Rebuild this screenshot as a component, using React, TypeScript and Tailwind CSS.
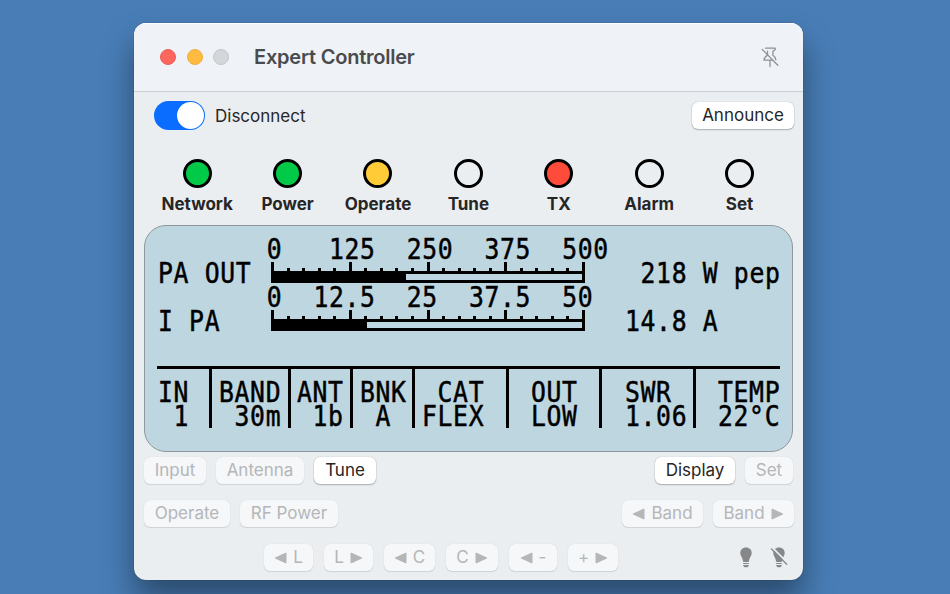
import clsx from 'clsx'

const leds = [
  { name: 'Network', color: 'bg-[#00ca48]' },
  { name: 'Power', color: 'bg-[#00ca48]' },
  { name: 'Operate', color: 'bg-[#ffcc37]' },
  { name: 'Tune', color: 'bg-transparent' },
  { name: 'TX', color: 'bg-[#ff4b3a]' },
  { name: 'Alarm', color: 'bg-transparent' },
  { name: 'Set', color: 'bg-transparent' },
]

const statusCells = [
  { width: 'w-[55px]', pad: 'pl-[1px]', lines: ['IN', ' 1'] },
  { width: 'w-[79px]', pad: 'pl-[7px]', lines: ['BAND', ' 30m'] },
  { width: 'w-[62px]', pad: 'pl-[6px]', lines: ['ANT', ' 1b'] },
  { width: 'w-[62px]', pad: 'pl-[7px]', lines: ['BNK', ' A'] },
  { width: 'w-[94px]', pad: 'pl-[7px]', lines: [' CAT', 'FLEX'] },
  { width: 'w-[93px]', pad: 'pl-[22px]', lines: ['OUT', 'LOW'] },
  { width: 'w-[94px]', pad: 'pl-[23px]', lines: ['SWR', '1.06'] },
  { width: 'w-[84px]', pad: 'pl-[22px]', lines: ['TEMP', '22°C'] },
]

function LcdText({ children }: { children: string }) {
  return (
    <div className="h-[24px] origin-left scale-x-[0.86] font-['DejaVu_Sans_Mono',monospace] text-[28.78px] leading-[24px] tracking-[0.76px] whitespace-pre text-black [-webkit-text-stroke:0.5px_#000]">
      {children}
    </div>
  )
}

function Meter({ value }: { value: number }) {
  const ticks = Array.from({ length: 21 }, (_, i) => i)
  return (
    <svg width="314" height="21" viewBox="0 0 314 21" className="mt-px block shrink-0" shapeRendering="crispEdges">
      <rect x="0" y="9" width="314" height="3" />
      <rect x="0" y="18" width="314" height="3" />
      <rect x="311" y="9" width="3" height="12" />
      <rect x="0" y="9" width={value} height="12" />
      {ticks.map((i) => (
        <rect
          key={i}
          x={Math.round(i * 15.55)}
          y={i % 5 === 0 ? 0 : 6}
          width="3"
          height={i % 5 === 0 ? 9 : 3}
        />
      ))}
    </svg>
  )
}

function MeterRow({ scale, label, value, reading }: { scale: string; label: string; value: number; reading: string }) {
  return (
    <div className="h-[48px]">
      <LcdText>{scale}</LcdText>
      <div className="flex h-[24px]">
        <div className="w-[113px] shrink-0">
          <LcdText>{label}</LcdText>
        </div>
        <Meter value={value} />
        <div className="ml-[40px] w-0">
          <LcdText>{reading}</LcdText>
        </div>
      </div>
    </div>
  )
}

function Arrow({ left }: { left?: boolean }) {
  return (
    <svg width="13" height="12" viewBox="0 0 13 12" fill="currentColor" stroke="currentColor" strokeLinejoin="round">
      {left ? <path d="M1.2 6 12 1V11Z" /> : <path d="M11.8 6 1 1V11Z" />}
    </svg>
  )
}

function Button({
  label,
  width,
  active,
  arrow,
}: {
  label: string
  width: string
  active?: boolean
  arrow?: 'left' | 'right'
}) {
  return (
    <button
      className={clsx(
        'flex h-[27px] shrink-0 items-center justify-center gap-[6px] rounded-[6px] text-[17px] whitespace-nowrap',
        width,
        active
          ? 'bg-white text-[#262626] shadow-[0_0_1px_rgba(0,0,0,0.3),0_1px_1.5px_rgba(0,0,0,0.25)]'
          : 'bg-[#f5f7f9] text-[#b4b6b8] shadow-[0_0_1px_rgba(0,0,0,0.15),0_1px_1px_rgba(0,0,0,0.1)]'
      )}
    >
      {arrow === 'left' && <Arrow left />}
      {label}
      {arrow === 'right' && <Arrow />}
    </button>
  )
}

function PinSlash() {
  return (
    <svg width="18" height="21" viewBox="0 0 18 21" fill="none" stroke="#8f9194" strokeWidth="1.3" strokeLinecap="round" strokeLinejoin="round">
      <path d="M4.5 1.2H14.2V2.6L11.9 4.6V8.2C13.6 9.2 14.6 10.7 14.8 12.6" />
      <path d="M6.5 4.2V8.2C4.3 9.4 3.1 11 3 13.2H11.5" />
      <path d="M9 13.5V19.5" />
      <path d="M1.2 2.4 16.8 18.3" />
    </svg>
  )
}

function Bulb({ slash }: { slash?: boolean }) {
  return (
    <svg width="18" height="21" viewBox="0 0 18 21" fill="#858789">
      <path d="M9 .5C5.6.5 3.3 2.8 3.3 5.9 3.3 9 5.6 10.1 6 14.2 6.1 14.8 6.3 15 6.8 15H11.2C11.7 15 11.9 14.8 12 14.2 12.4 10.1 14.7 9 14.7 5.9 14.7 2.8 12.4.5 9 .5Z" />
      <path d="M6.2 16H11.8V17.1H6.2ZM6.2 18H11.8C11.7 19.5 10.7 20.3 9 20.3S6.3 19.5 6.2 18Z" />
      {slash && (
        <>
          <path d="M2.6.8 17.5 15.7" stroke="#ebeef1" strokeWidth="1.8" />
          <path d="M1.5 2 16.7 17.2" stroke="#858789" strokeWidth="1.3" strokeLinecap="round" />
        </>
      )}
    </svg>
  )
}

export default function App() {
  return (
    <div className="h-[594px] w-[950px] overflow-hidden bg-[#487db6] pt-[23px] pl-[134px] font-['Inter',sans-serif]">
      <div className="flex h-[557px] w-[669px] flex-col overflow-hidden rounded-[12px] bg-[#ebeef1] shadow-[0_0_1px_rgba(0,0,0,0.6),0_20px_32px_rgba(0,0,0,0.4)]">
        <header className="flex h-[69px] shrink-0 items-center border-b border-[#c9d0d4] bg-[#eff2f6] pr-[24px] pl-[26px] shadow-[inset_0_1px_0_#ffffff]">
          <div className="flex gap-[10.5px]">
            <span className="size-4 rounded-full border border-[#ea5f55] bg-[#ff665c]" />
            <span className="size-4 rounded-full border border-[#eeae3d] bg-[#ffbb40]" />
            <span className="size-4 rounded-full border border-[#c4c7ca] bg-[#d4d7da]" />
          </div>
          <h1 className="ml-[25px] flex-1 pb-px text-[20px] font-semibold tracking-[-0.22px] text-[#494b4d]">Expert Controller</h1>
          <PinSlash />
        </header>

        <div className="mt-[9px] flex h-[29px] items-center pr-[9px] pl-[20px]">
          <div className="flex h-[29px] w-[51px] justify-end rounded-full bg-[#0a6dff] p-[1px]">
            <span className="size-[27px] rounded-full bg-white" />
          </div>
          <span className="ml-[10px] flex-1 pt-[3px] text-[17px] text-[#262626]">Disconnect</span>
          <Button label="Announce" width="w-[102px]" active />
        </div>

        <div className="mt-[29px] ml-[18px] flex h-[66px]">
          {leds.map((led) => (
            <div key={led.name} className="flex w-[90.4px] flex-col items-center">
              <span className={clsx('size-[29px] rounded-full border-[3px] border-black', led.color)} />
              <span className="mt-[4px] text-[17px] leading-6 font-bold text-[#262626]">{led.name}</span>
            </div>
          ))}
        </div>

        <section className="mx-[10px] h-[227px] shrink-0 rounded-[22px] border-[1.5px] border-[#8d989e] bg-[#bdd6df] pt-[11px] pl-[12px]">
          <div className="pl-[1px]">
            <MeterRow
              scale="       0   125  250  375  500"
              label="PA OUT"
              value={135}
              reading=" 218 W pep"
            />
            <MeterRow
              scale="       0  12.5  25  37.5  50"
              label="I PA"
              value={96}
              reading="14.8 A"
            />
          </div>
          <div className="mt-[33px] h-[3px] w-[623px] bg-black" />
          <div className="flex h-[59px] w-[623px]">
            {statusCells.map((cell) => (
              <div
                key={cell.lines[0]}
                className={clsx('shrink-0 border-r-[3px] border-black pt-[11px] last:border-r-0', cell.width, cell.pad)}
              >
                <LcdText>{cell.lines[0]}</LcdText>
                <LcdText>{cell.lines[1]}</LcdText>
              </div>
            ))}
          </div>
        </section>

        <div className="mt-[5px] flex h-[27px] gap-[10px] px-[10px]">
          <Button label="Input" width="w-[62px]" />
          <Button label="Antenna" width="w-[88px]" />
          <Button label="Tune" width="w-[62px]" active />
          <div className="flex-1" />
          <Button label="Display" width="w-[80px]" active />
          <Button label="Set" width="w-[48px]" />
        </div>

        <div className="mt-[16px] flex h-[27px] gap-[10px] pr-[9px] pl-[10px]">
          <Button label="Operate" width="w-[86px]" />
          <Button label="RF Power" width="w-[98px]" />
          <div className="flex-1" />
          <Button label="Band" width="w-[81px]" arrow="left" />
          <Button label="Band" width="w-[81px]" arrow="right" />
        </div>

        <div className="mt-[17px] flex h-[27px] items-center gap-[11px] pr-[15px] pl-[130px]">
          <Button label="L" width="w-[49px]" arrow="left" />
          <Button label="L" width="w-[49px]" arrow="right" />
          <Button label="C" width="w-[51px]" arrow="left" />
          <Button label="C" width="w-[52px]" arrow="right" />
          <Button label="-" width="w-[48px]" arrow="left" />
          <Button label="+" width="w-[50px]" arrow="right" />
          <div className="ml-auto flex gap-[15px]">
            <Bulb />
            <Bulb slash />
          </div>
        </div>
      </div>
    </div>
  )
}
